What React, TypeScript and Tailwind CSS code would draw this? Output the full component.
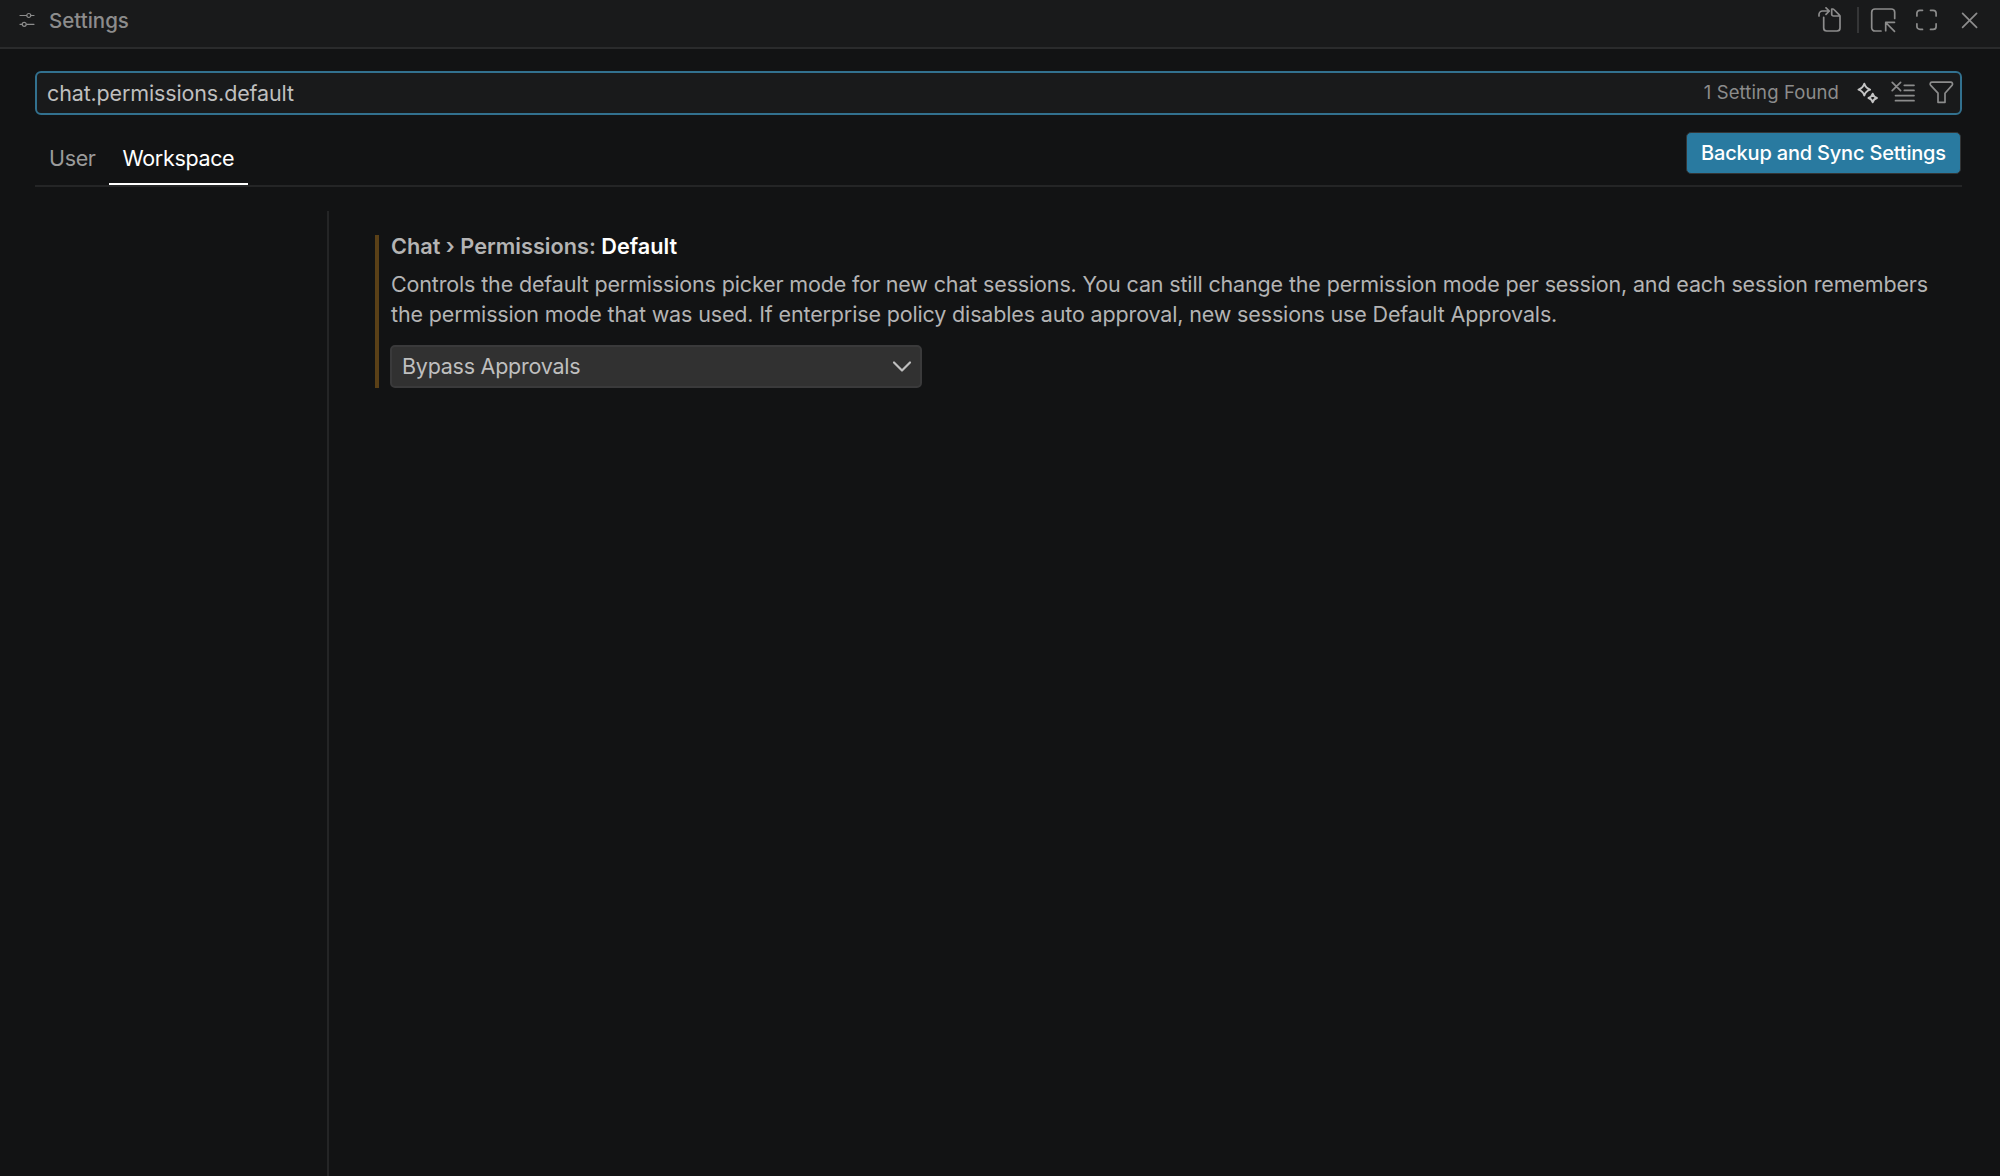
import React, { useState } from "react";

interface IconProps {
  className?: string;
  strokeWidth?: number;
  children: React.ReactNode;
}

const Icon: React.FC<IconProps> = ({
  className = "",
  strokeWidth = 1.7,
  children,
}) => (
  <svg
    className={`w-[26px] h-[26px] shrink-0 ${className}`}
    viewBox="0 0 26 26"
    fill="none"
    stroke="currentColor"
    strokeWidth={strokeWidth}
    strokeLinecap="round"
    strokeLinejoin="round"
  >
    {children}
  </svg>
);

const SettingsIcon = () => (
  <svg
    className="w-4 h-4 shrink-0"
    viewBox="0 0 16 16"
    fill="none"
    stroke="currentColor"
    strokeWidth={1.2}
    strokeLinecap="round"
  >
    <path d="M1 3.5h6.5M12 3.5h3M1 12.3h2.3M7.7 12.3H15" />
    <circle cx="9.8" cy="3.5" r="2" />
    <circle cx="5.2" cy="12.3" r="2" />
  </svg>
);

const TitleBar = () => (
  <header className="flex h-[49px] items-start border-b-2 border-[#2a2b2c] bg-[#191a1b] pr-[17px] pl-[19px] text-[#8c8c8c]">
    <div className="flex h-10 items-center gap-[14px]">
      <SettingsIcon />
      <span className="pt-0.5 text-[20.5px] leading-6 font-medium">
        Settings
      </span>
    </div>
    <div className="ml-auto flex h-10 items-center">
      <button aria-label="Open Settings (JSON)">
        <Icon>
          <path d="M3 9V7.5C3 5.5 4.6 4 6.5 4h6.8M10 .8 13.3 4 10 7.3" />
          <path d="M7.7 10.3V21a3 3 0 0 0 3 3H21a3 3 0 0 0 3-3V9.2a1.5 1.5 0 0 0-.5-1.1l-5.6-5.6a1.6 1.6 0 0 0-1.1-.5h-1.1v5.2a1.8 1.8 0 0 0 1.8 1.8H24" />
        </Icon>
      </button>
      <div className="ml-[15px] mr-[11px] h-[26px] w-0.5 bg-[#353637]" />
      <button aria-label="Open in Editor">
        <Icon>
          <path d="M11 24H5a3.3 3.3 0 0 1-3.3-3.3V5.3A3.3 3.3 0 0 1 5 2h16.4a3.3 3.3 0 0 1 3.3 3.3v6.2" />
          <path d="M24.5 24.3l-8.8-8.8M15.7 23.7v-8.4h8.8" />
        </Icon>
      </button>
      <button aria-label="Maximize" className="ml-[18px]">
        <Icon>
          <path d="M2.9 9V6.3a3 3 0 0 1 3-3h2.6M16.5 3.3h2.6a3 3 0 0 1 3 3V9M22.1 16.8v2.6a3 3 0 0 1-3 3h-2.6M8.5 22.4H5.9a3 3 0 0 1-3-3v-2.6" />
        </Icon>
      </button>
      <button aria-label="Close" className="ml-[17px]">
        <Icon>
          <path d="M5.6 6.4l14 14M19.6 6.4l-14 14" />
        </Icon>
      </button>
    </div>
  </header>
);

const SearchBox = () => {
  const [query, setQuery] = useState("chat.permissions.default");

  return (
    <div className="flex h-11 items-center rounded-md border-2 border-[#32718f] bg-[#191a1b] pr-1.5 pl-[10px] text-[#8c8c8c]">
      <input
        value={query}
        onChange={(e) => setQuery(e.target.value)}
        className="min-w-0 flex-1 bg-transparent text-[21.5px] tracking-[-0.14px] text-[#bfbfbf] outline-none"
      />
      <span className="text-[18.5px] tracking-[0.12px] whitespace-nowrap">
        1 Setting Found
      </span>
      <Icon className="ml-4 text-[#c4c4c4]" strokeWidth={2}>
        <path d="M9.3 3.8c1.1 3.5 2.3 4.7 5.8 5.8-3.5 1.1-4.7 2.3-5.8 5.8-1.1-3.5-2.3-4.7-5.8-5.8C7 8.5 8.2 7.3 9.3 3.8z" />
        <path d="M17.7 13.8c.8 2.6 1.6 3.4 4.2 4.2-2.6.8-3.4 1.6-4.2 4.2-.8-2.6-1.6-3.4-4.2-4.2 2.6-.8 3.4-1.6 4.2-4.2z" />
      </Icon>
      <Icon className="ml-2">
        <path d="M3.2 2.3l8.4 8.4M11.6 2.3l-8.4 8.4M15.3 5.3H25M15.3 10.4H25M6.5 15.6H25M6.5 20.7H25" />
      </Icon>
      <Icon className="ml-[13px]">
        <path d="M4 2.2h18.7c1.5 0 2.4 1.7 1.5 2.9L17 13.2v9.1h-7v-9.1L2.5 5.1C1.6 3.9 2.5 2.2 4 2.2z" />
      </Icon>
    </div>
  );
};

const SettingsTabs = () => (
  <div className="mt-[17px] flex h-[55px] items-start justify-between border-b-2 border-[#242526]">
    <div className="flex h-[53px] text-[21.5px] tracking-[-0.35px]">
      <button className="pt-px pr-[13px] pb-0.5 pl-[14px] text-[#9b9b9b]">
        User
      </button>
      <button className="border-b-2 border-white px-[14px] pt-px text-white">
        Workspace
      </button>
    </div>
    <button className="mr-px flex h-[42px] w-[275px] items-center justify-center rounded-[5px] border border-[#333536] bg-[#297aa0] text-[20px] font-medium tracking-[-0.19px] whitespace-nowrap text-white">
      Backup and Sync Settings
    </button>
  </div>
);

const SettingItem = () => (
  <div className="border-l-4 border-[#5a4017] pl-[11px]">
    <h3 className="h-[34px] pl-px text-[21.7px] leading-[22px] font-semibold text-[#b4b4b4]">
      Chat › Permissions: <span className="text-white">Default</span>
    </h3>
    <p className="pl-px text-[21.5px] leading-[30px] tracking-[-0.15px] whitespace-nowrap text-[#b4b4b4]">
      Controls the default permissions picker mode for new chat sessions. You
      can still change the permission mode per session, and each session
      remembers
      <br />
      the permission mode that was used. If enterprise policy disables auto
      approval, new sessions use Default Approvals.
    </p>
    <button className="mt-4 flex h-[43px] w-[532px] items-center justify-between rounded-[5px] border-2 border-[#3a3a3b] bg-[#313131] pr-[5px] pl-[10px] text-[21.5px] tracking-[-0.25px] text-[#bfbfbf]">
      <span>Bypass Approvals</span>
      <Icon strokeWidth={2.2}>
        <path d="M5 8.5l8 8 8-8" />
      </Icon>
    </button>
  </div>
);

export default function App() {
  return (
    <div className="flex h-screen flex-col overflow-hidden bg-[#121314] font-['Inter',sans-serif]">
      <TitleBar />
      <main className="flex min-h-0 flex-1 flex-col pt-[22px] pr-[38px] pl-[35px]">
        <SearchBox />
        <SettingsTabs />
        <div className="mt-6 flex min-h-0 flex-1">
          <aside className="w-[294px] shrink-0 border-r-2 border-[#242526]" />
          <section className="pt-6 pl-[46px]">
            <SettingItem />
          </section>
        </div>
      </main>
    </div>
  );
}
